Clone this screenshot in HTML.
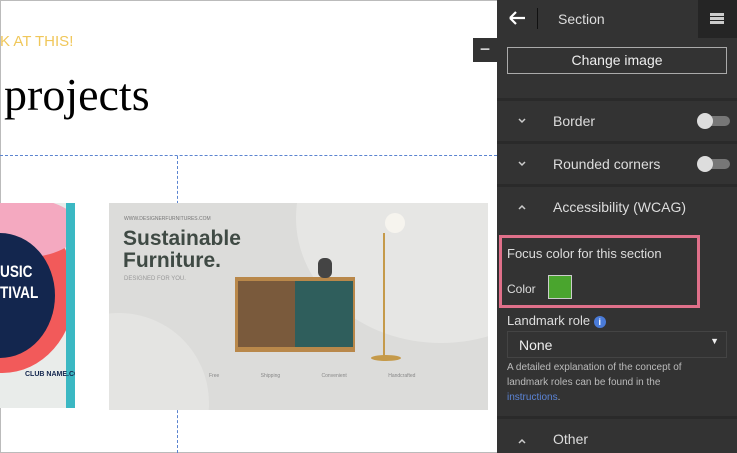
<!DOCTYPE html>
<html><head><style>
*{margin:0;padding:0;box-sizing:border-box}
body{width:737px;height:453px;overflow:hidden;position:relative;background:#fff;font-family:"Liberation Sans",sans-serif}
.a{position:absolute}
.p{color:#ddd;font-size:14px}
.sep{position:absolute;left:497px;width:240px;height:3px;background:#2a2a2a}
.tg{position:absolute;width:32px;height:10px;border-radius:5px;background:#777}
.tg:before{content:"";position:absolute;left:-1px;top:-3px;width:16px;height:16px;border-radius:50%;background:#ddd}
.ch{position:absolute;left:518px}
</style></head><body>
<div class="a" style="left:0;top:0;width:497px;height:453px;border:1px solid #bbb;border-right:none"></div>
<div class="a" style="left:0;top:33px;font-size:15px;color:#f0c75a">K AT THIS!</div>
<div class="a" style="left:4px;top:68px;font-family:'Liberation Serif',serif;font-size:46px;color:#000">projects</div>
<div class="a" style="left:0;top:155px;width:497px;border-top:1px dashed #5b84d0"></div>
<div class="a" style="left:177px;top:156px;height:297px;border-left:1px dashed #5b84d0"></div>
<div class="a" style="left:0;top:203px;width:75px;height:205px;background:#e9ecea;overflow:hidden">
 <div class="a" style="left:-70px;top:5px;width:145px;height:165px;border-radius:50%;background:#f25a5a"></div>
 <div class="a" style="left:-40px;top:-5px;width:120px;height:60px;border-radius:50%;background:#f4a9c0"></div>
 <div class="a" style="left:66px;top:0;width:9px;height:205px;background:#3bb8c3"></div>
 <div class="a" style="left:-55px;top:30px;width:110px;height:125px;border-radius:50%;background:#13264e"></div>
 <div class="a" style="left:0;top:58px;color:#fff;font-size:17px;font-weight:bold;line-height:21px;transform:scaleX(.8);transform-origin:left">USIC<br>TIVAL</div>
 <div class="a" style="left:25px;top:168px;color:#13264e;font-size:7px;font-weight:bold;white-space:nowrap">CLUB NAME.COM</div>
</div>
<div class="a" style="left:109px;top:203px;width:379px;height:207px;background:#dcdcda;overflow:hidden">
 <div class="a" style="left:187px;top:-110px;width:290px;height:250px;border-radius:50%;background:#e6e6e4"></div>
 <div class="a" style="left:-80px;top:110px;width:180px;height:180px;border-radius:50%;background:#e4e4e2"></div>
 <div class="a" style="left:15px;top:13px;font-size:5px;color:#777">WWW.DESIGNERFURNITURES.COM</div>
 <div class="a" style="left:14px;top:25px;font-size:21px;font-weight:bold;color:#3f4a44;line-height:22px">Sustainable<br>Furniture.</div>
 <div class="a" style="left:15px;top:73px;font-size:6px;color:#999">DESIGNED FOR YOU.</div>
 <div class="a" style="left:126px;top:74px;width:120px;height:75px;background:#b9884a"></div>
 <div class="a" style="left:129px;top:78px;width:58px;height:66px;background:#7a5a3c"></div>
 <div class="a" style="left:186px;top:78px;width:58px;height:66px;background:#2f5e5c"></div>
 <div class="a" style="left:209px;top:55px;width:14px;height:20px;border-radius:6px;background:#444"></div>
 <div class="a" style="left:276px;top:10px;width:20px;height:20px;border-radius:50%;background:#f6f4ee"></div>
 <div class="a" style="left:274px;top:30px;width:2px;height:125px;background:#c59a4a"></div>
 <div class="a" style="left:262px;top:152px;width:30px;height:6px;border-radius:50%;background:#c59a4a"></div>
 <div class="a" style="left:100px;top:170px;font-size:5px;color:#888;word-spacing:40px">Free&nbsp;Shipping Convenient Handcrafted</div>
</div>
<div class="a" style="left:497px;top:0;width:240px;height:453px;background:#333"></div>
<div class="a" style="left:473px;top:38px;width:24px;height:24px;background:#333;color:#fff;text-align:center;font-size:18px;line-height:22px">−</div>
<svg class="a" style="left:508px;top:11px" width="18" height="14"><path d="M2 7H17M2 7L8 1M2 7L8 13" stroke="#fff" stroke-width="2.2" fill="none"/></svg>
<div class="a" style="left:537px;top:8px;width:1px;height:21px;background:#111"></div>
<div class="a p" style="left:558px;top:11px">Section</div>
<div class="a" style="left:698px;top:0;width:39px;height:38px;background:#252525"></div>
<div class="a" style="left:710px;top:13px;width:14px;height:3px;background:#ccc;box-shadow:0 4px 0 #ccc,0 8px 0 #ccc"></div>
<div class="a" style="left:507px;top:47px;width:220px;height:27px;border:1px solid #aaa;color:#eee;font-size:14px;text-align:center;line-height:25px">Change image</div>
<div class="sep" style="top:98px"></div>
<svg class="ch" style="top:118px" width="8" height="6"><path d="M1 1L4 4L7 1" stroke="#ccc" stroke-width="1.5" fill="none"/></svg><div class="a p" style="left:553px;top:113px">Border</div><div class="tg" style="left:698px;top:116px"></div>
<div class="sep" style="top:141px"></div>
<svg class="ch" style="top:161px" width="8" height="6"><path d="M1 1L4 4L7 1" stroke="#ccc" stroke-width="1.5" fill="none"/></svg><div class="a p" style="left:553px;top:156px">Rounded corners</div><div class="tg" style="left:698px;top:159px"></div>
<div class="sep" style="top:184px"></div>
<svg class="ch" style="top:204px" width="8" height="6"><path d="M1 5L4 2L7 5" stroke="#ccc" stroke-width="1.5" fill="none"/></svg><div class="a p" style="left:553px;top:199px">Accessibility (WCAG)</div>
<div class="a" style="left:499px;top:235px;width:201px;height:73px;border:3px solid #e0708a"></div>
<div class="a" style="left:507px;top:246px;color:#ddd;font-size:13px">Focus color for this section</div>
<div class="a" style="left:507px;top:282px;color:#ddd;font-size:12px">Color</div>
<div class="a" style="left:548px;top:275px;width:24px;height:24px;background:#4aa52e;border:1px solid #ccc"></div>
<div class="a" style="left:507px;top:313px;color:#ddd;font-size:13px">Landmark role <span style="display:inline-block;width:12px;height:12px;border-radius:50%;background:#4a7bd8;color:#fff;font-size:9px;text-align:center;line-height:12px;font-weight:bold">i</span></div>
<div class="a" style="left:507px;top:331px;width:220px;height:27px;border:1px solid #444;color:#eee;font-size:14px;padding:5px 11px">None<span style="position:absolute;right:7px;top:4px;font-size:9px">▼</span></div>
<div class="a" style="left:507px;top:360px;color:#bbb;font-size:10px;line-height:15px">A detailed explanation of the concept of<br>landmark roles can be found in the<br><span style="color:#5b84d6">instructions</span>.</div>
<div class="sep" style="top:416px"></div>
<svg class="ch" style="top:438px" width="8" height="6"><path d="M1 5L4 2L7 5" stroke="#ccc" stroke-width="1.5" fill="none"/></svg><div class="a p" style="left:553px;top:431px">Other</div>
</body></html>
